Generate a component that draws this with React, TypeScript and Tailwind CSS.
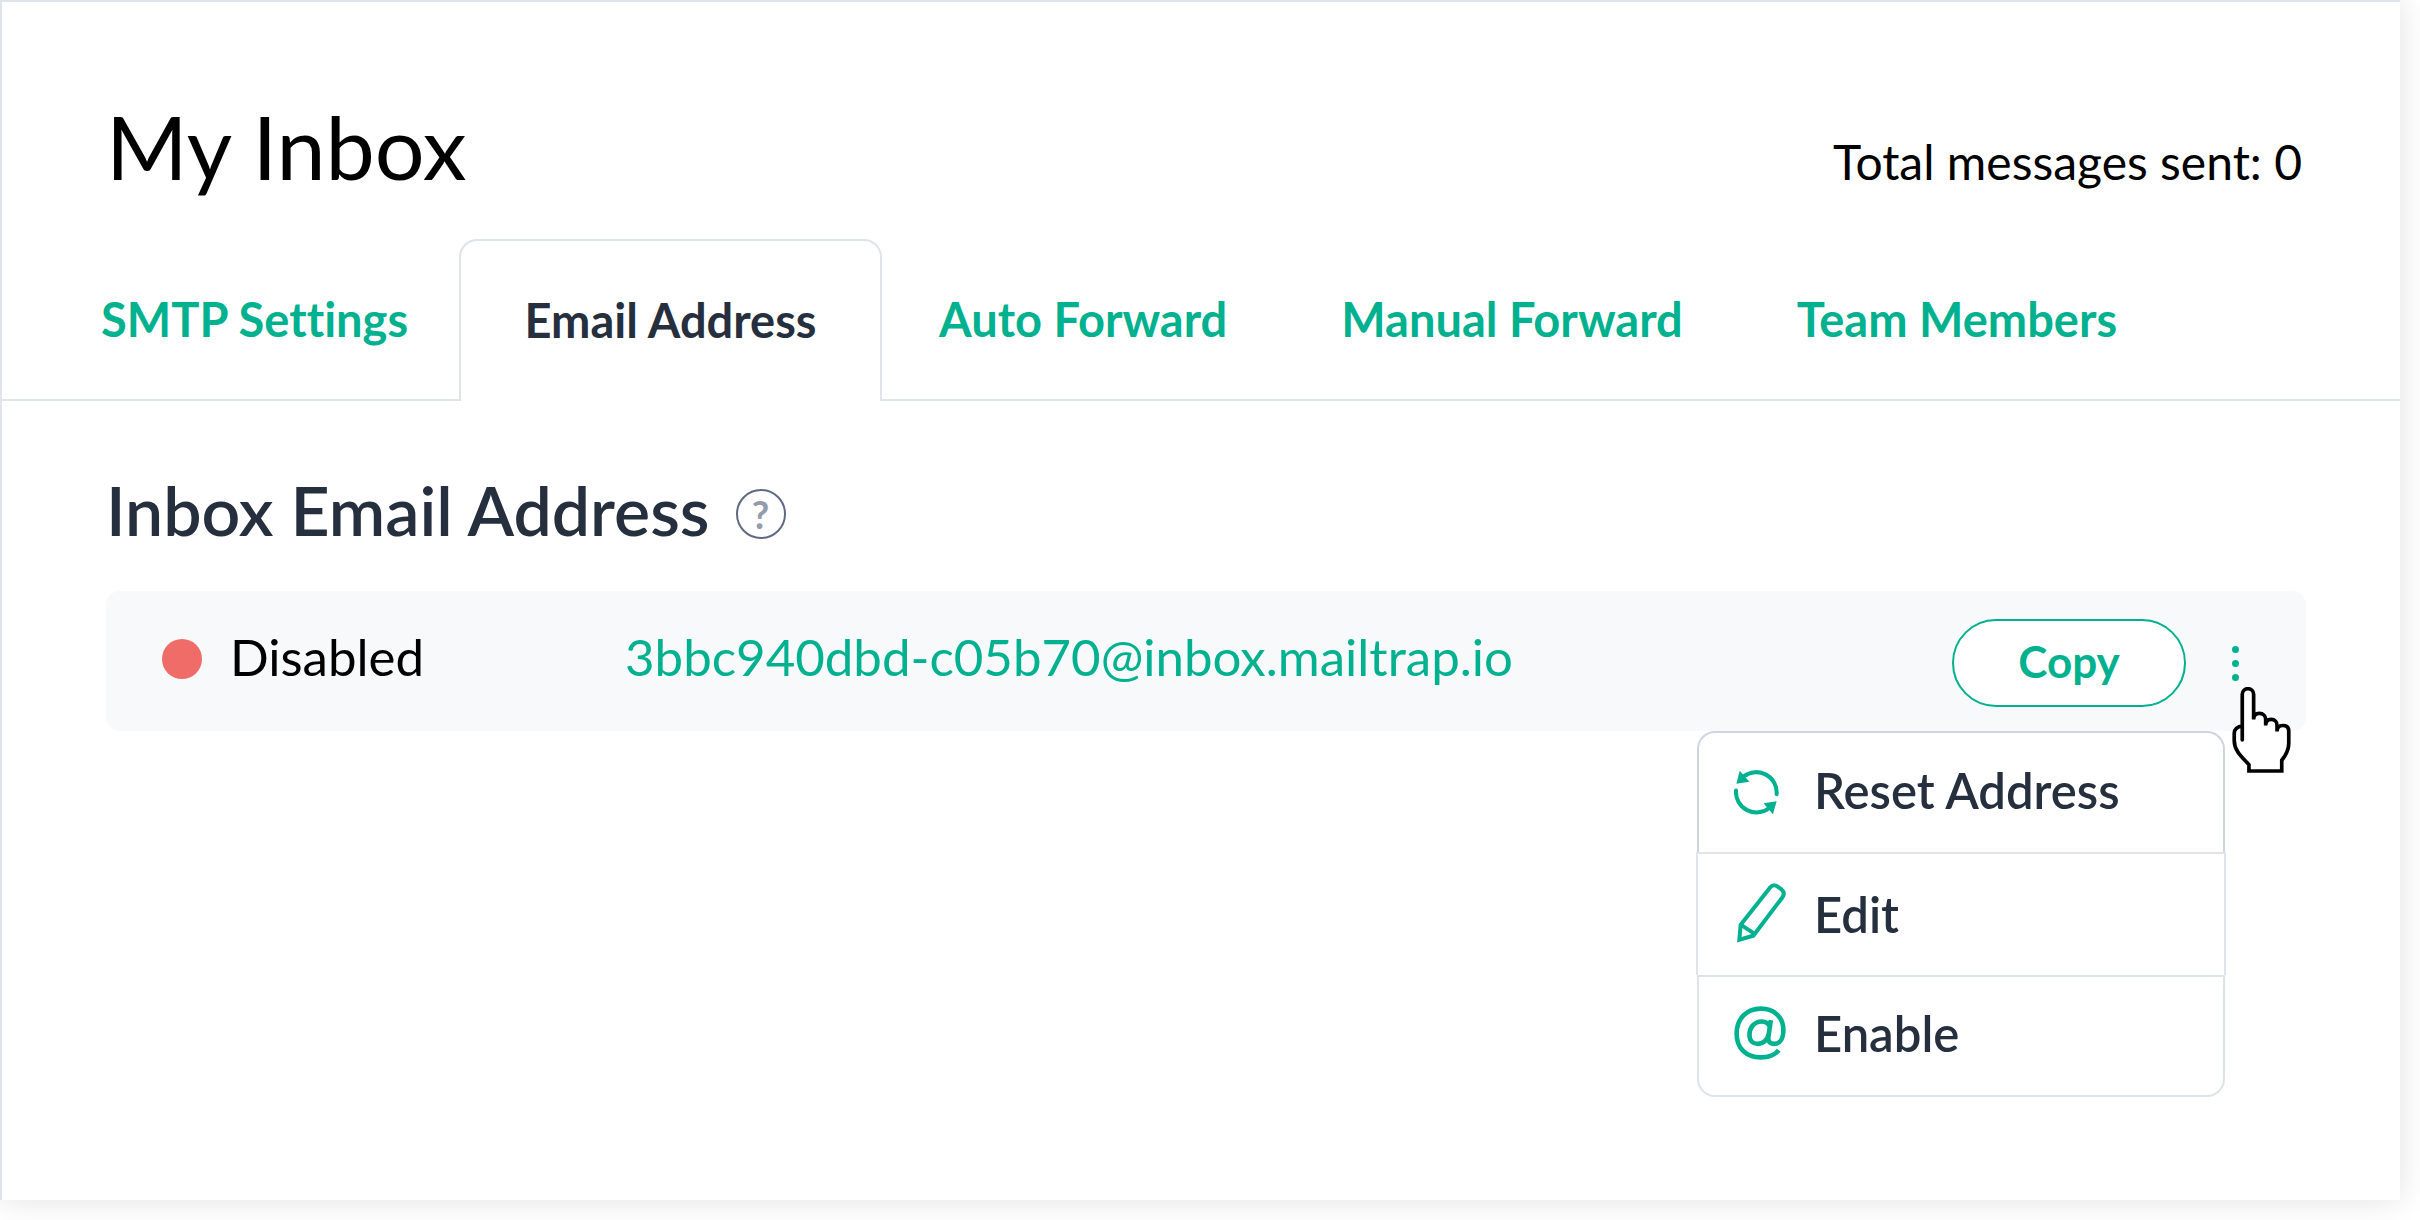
import React from "react";

const tabs = ["SMTP Settings", "Email Address", "Auto Forward", "Manual Forward", "Team Members"];

function ResetIcon() {
  return (
    <svg viewBox="71 96 134 134" className="h-[45px] w-[45px]" aria-hidden="true">
      <g fill="none" stroke="currentColor" strokeWidth="12" strokeLinecap="round">
        <path d="M100 115A61 61 0 0 1 198 168" />
        <path d="M77 157A61 61 0 0 0 176 209" />
      </g>
      <path d="M88 98 117 131 78 137Z" fill="currentColor" />
      <path d="M198 189 159 195 187 228Z" fill="currentColor" />
    </svg>
  );
}

function PencilIcon() {
  return (
    <svg viewBox="77 432 150 180" className="ml-0.5 h-[60px] w-[50px]" aria-hidden="true">
      <g fill="none" stroke="currentColor" strokeWidth="12">
        <path d="M87 602 91 557 180 445Q189 434 201 442L213 451Q225 461 217 474L129 590Z" />
        <path d="M91 557 132 584" />
      </g>
    </svg>
  );
}

function AtIcon() {
  return (
    <svg viewBox="71 800 158 164" className="h-[54px] w-[52px]" aria-hidden="true">
      <g fill="none" stroke="currentColor" strokeWidth="14">
        <path d="M207 934C195 950 175 956 152 956C107 956 79 928 79 884C79 838 110 808 152 808C196 808 221 836 221 873C221 898 211 915 194 915C178 915 173 907 176 889L183 843" />
        <path d="M181 866C177 852 168 847 155 847C133 847 118 865 118 888C118 906 129 915 143 915C160 915 173 902 176 886" />
      </g>
    </svg>
  );
}

function HandPointer() {
  return (
    <svg viewBox="157 205 175 257" className="pointer-events-none absolute top-24 right-[15px] z-10 h-[86px] w-[59px]" aria-hidden="true">
      <path
        d="M187 363V227A17 17 0 0 1 221 227V302C221 290 228 284 238 284C250 284 257 292 257 302V320C257 308 262 302 273 302C285 302 291 310 291 320V338C291 326 298 320 308 320C320 320 326 326 326 338V372C326 395 318 408 305 424V456H207V437C185 413 163 395 163 365V343C163 332 172 322 187 322"
        fill="white"
        stroke="black"
        strokeWidth="11"
        strokeLinecap="round"
      />
    </svg>
  );
}

export default function App() {
  return (
    <div className="flex min-h-screen bg-white pr-5 pb-5 font-['Lato',sans-serif] [font-variant-ligatures:none]">
      <main className="flex-1 border-t-2 border-l-2 border-[#dfe3ea] bg-white shadow-[0_0_30px_rgba(0,0,0,0.12)]">
        <header className="flex items-baseline justify-between pt-[91px] pr-[98px] pl-[104px] text-black">
          <h1 className="text-[88px] leading-[106px]">My Inbox</h1>
          <p className="text-[48px] leading-[58px]">Total messages sent: 0</p>
        </header>

        <div role="tablist" className="mt-10 flex h-[162px] border-b-2 border-[#dfe3ea] pl-[42px] text-[47px] leading-[56px] font-bold">
          {tabs.map((tab) =>
            tab === "Email Address" ? (
              <button
                key={tab}
                type="button"
                role="tab"
                aria-selected="true"
                className="-mb-0.5 -ml-1.5 w-[423px] rounded-t-[18px] border-2 border-b-0 border-[#dfe3ea] bg-white pb-0.5 text-[#262f3e]"
              >
                {tab}
              </button>
            ) : (
              <button key={tab} type="button" role="tab" aria-selected="false" className="px-[57px] text-[#00b18f]">
                {tab}
              </button>
            ),
          )}
        </div>

        <section className="pt-[68px] pr-[94px] pl-[104px]">
          <div className="flex items-center gap-[26px]">
            <h2 className="text-[68px] leading-[82px] font-semibold text-[#262f3e]">Inbox Email Address</h2>
            <button
              type="button"
              aria-label="Help"
              className="mt-2 flex size-[50px] items-center justify-center rounded-full border-2 border-[#5f6a82] text-[38px] leading-[44px] font-bold text-[#949cab]"
            >
              ?
            </button>
          </div>

          <div className="relative mt-10 flex h-[140px] items-center rounded-[14px] bg-[#f8f9fb] pr-[51px] pl-14 text-[51px] leading-[62px]">
            <div className="flex w-[463px] items-center gap-7 pb-1 text-black">
              <span className="size-10 rounded-full bg-[#ef6c68]" />
              <span className="pb-1">Disabled</span>
            </div>
            <a href="mailto:3bbc940dbd-c05b70@inbox.mailtrap.io" className="pb-2 text-[#00b18f]">
              3bbc940dbd-c05b70@inbox.mailtrap.io
            </a>
            <button
              type="button"
              className="mt-1 ml-auto h-[88px] w-[234px] rounded-full border-2 border-[#00b18f] bg-white pb-1 text-[44px] leading-[54px] font-bold text-[#00b18f]"
            >
              Copy
            </button>
            <button type="button" aria-label="More actions" className="mt-1 ml-[29px] flex w-10 flex-col items-center gap-[7px] py-4">
              <span className="size-[7px] rounded-full bg-[#00b18f]" />
              <span className="size-[7px] rounded-full bg-[#00b18f]" />
              <span className="size-[7px] rounded-full bg-[#00b18f]" />
            </button>

            <div role="menu" className="absolute top-full right-[81px] w-[528px] text-[49px] leading-[58px] font-semibold text-[#262f3e]">
              <button type="button" role="menuitem" className="flex h-[121px] w-full items-center gap-7 rounded-t-[18px] border-2 border-b-0 border-[#d0d4e0] bg-white pl-[35px]">
                <span className="w-[52px] text-[#00b18f]"><ResetIcon /></span>
                <span className="pb-1.5">Reset Address</span>
              </button>
              <div className="-mx-px">
                <button type="button" role="menuitem" className="flex h-[123px] w-full items-center gap-7 border-2 border-b-0 border-[#dfe3ea] bg-white pl-9">
                  <span className="w-[52px] pb-1 text-[#00b18f]"><PencilIcon /></span>
                  <span className="pb-0.5">Edit</span>
                </button>
              </div>
              <button type="button" role="menuitem" className="flex h-[122px] w-full items-center gap-7 rounded-b-[18px] border-2 border-[#dfe3ea] bg-white pl-[35px]">
                <span className="w-[52px] pb-1.5 text-[#00b18f]"><AtIcon /></span>
                <span className="pb-1.5">Enable</span>
              </button>
            </div>
            <HandPointer />
          </div>
        </section>
      </main>
    </div>
  );
}
